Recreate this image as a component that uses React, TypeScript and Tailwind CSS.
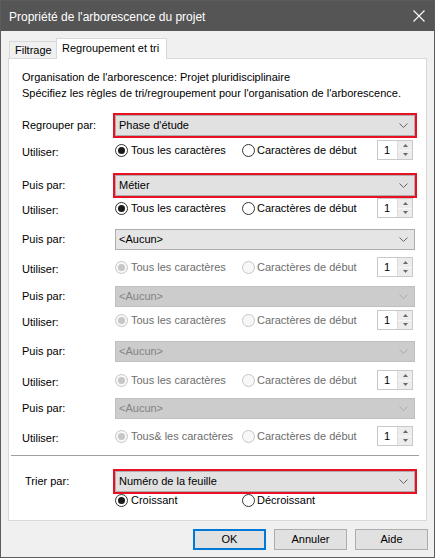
import React from "react";

function Chevron({ disabled }: { disabled?: boolean }) {
  return (
    <svg width="9" height="5" viewBox="0 0 9 5" className="shrink-0">
      <path d="M0.5 0.5 L4.5 4.5 L8.5 0.5" fill="none" stroke={disabled ? "#ababab" : "#666666"} strokeWidth="1" />
    </svg>
  );
}

function Select({ value, state }: { value: string; state: "hl" | "on" | "off" }) {
  if (state === "off") {
    return (
      <div className="w-[300px] h-[21px] flex items-center justify-between pl-[3px] pr-[6px] border border-[#bfbfbf] bg-[#cccccc] text-[#838383]">
        <span>{value}</span>
        <Chevron disabled />
      </div>
    );
  }
  if (state === "hl") {
    return (
      <div className="w-[300px] h-[21px] flex items-center justify-between pl-[3px] pr-[6px] border border-[#adadad] bg-[#e1e1e1] text-black ring-2 ring-[#e81123]">
        <span>{value}</span>
        <Chevron />
      </div>
    );
  }
  return (
    <div className="w-[300px] h-[21px] flex items-center justify-between pl-[3px] pr-[6px] border border-[#adadad] bg-[#e5e5e5] text-black">
      <span>{value}</span>
      <Chevron />
    </div>
  );
}

function Radio({ checked, disabled }: { checked?: boolean; disabled?: boolean }) {
  if (disabled) {
    return (
      <span className="w-[13px] h-[13px] rounded-full border border-[#c6c6c6] bg-[#f7f7f7] flex items-center justify-center shrink-0">
        {checked ? <span className="w-[7px] h-[7px] rounded-full bg-[#c6c6c6]" /> : null}
      </span>
    );
  }
  return (
    <span className="w-[13px] h-[13px] rounded-full border border-[#333333] bg-white flex items-center justify-center shrink-0">
      {checked ? <span className="w-[7px] h-[7px] rounded-full bg-[#1a1a1a]" /> : null}
    </span>
  );
}

function Spin() {
  return (
    <div className="w-[36px] h-[20px] border border-[#c9c9c9] bg-white flex shrink-0">
      <div className="flex-1 flex items-center pl-[6px] text-black">1</div>
      <div className="w-[15px] flex flex-col border-l border-[#dcdcdc]">
        <div className="flex-1 flex items-center justify-center bg-[#ececec]">
          <svg width="5" height="3" viewBox="0 0 5 3">
            <path d="M0 3 L2.5 0 L5 3 Z" fill="#6a6a6a" />
          </svg>
        </div>
        <div className="flex-1 flex items-center justify-center bg-[#ececec] border-t border-[#f8f8f8]">
          <svg width="5" height="3" viewBox="0 0 5 3">
            <path d="M0 0 L2.5 3 L5 0 Z" fill="#6a6a6a" />
          </svg>
        </div>
      </div>
    </div>
  );
}

function SelectRow({ label, value, state, mt }: { label: string; value: string; state: "hl" | "on" | "off"; mt: string }) {
  return (
    <div className={"flex items-center h-[21px] " + mt}>
      <div className="w-[93px]">{label}</div>
      <Select value={value} state={state} />
    </div>
  );
}

function UseRow({ mt, disabled, first }: { mt: string; disabled?: boolean; first?: string }) {
  const txt = disabled ? "text-[#6d6d6d]" : "text-black";
  return (
    <div className={"flex items-center h-[20px] " + mt}>
      <div className="w-[93px] mt-[4px]">Utiliser:</div>
      <div className="w-[127px] flex items-center">
        <Radio checked disabled={disabled} />
        <span className={"ml-[3px] " + txt}>{first ?? "Tous les caractères"}</span>
      </div>
      <div className="w-[135px] flex items-center">
        <Radio disabled={disabled} />
        <span className={"ml-[2px] " + txt}>Caractères de début</span>
      </div>
      <Spin />
    </div>
  );
}

export default function App() {
  return (
    <div className="w-[435px] h-[558px] bg-[#f0f0f0] border border-[#5c5c5c] flex flex-col font-['Liberation_Sans',Arial,sans-serif] text-[11px] text-black">
      {/* Title bar */}
      <div className="h-[30px] bg-[#555555] flex items-center justify-between pl-[8px] pr-[9px] text-white">
        <span className="text-[12px] mt-[1px]">Propriété de l'arborescence du projet</span>
        <svg width="12" height="12" viewBox="0 0 12 12">
          <path d="M0.5 0.5 L11.5 11.5 M11.5 0.5 L0.5 11.5" stroke="#ffffff" strokeWidth="1.1" fill="none" />
        </svg>
      </div>

      {/* Tabs */}
      <div className="h-[27px] flex items-end pl-[8px]">
        <div className="h-[17px] w-[47px] border-l border-t border-[#d9d9d9] bg-[#f0f0f0] pl-[5px] flex items-center">
          Filtrage
        </div>
        <div className="h-[21px] w-[111px] -mb-px relative z-10 border-l border-t border-r border-[#d9d9d9] bg-white pl-[5px] pb-[2px] flex items-center">
          Regroupement et tri
        </div>
      </div>

      {/* Panel */}
      <div className="mx-[7px] h-[463px] border border-[#d9d9d9] bg-white flex flex-col pl-[13px] pt-[10px]">
        <div className="leading-[16px]">
          <div>Organisation de l'arborescence: Projet pluridisciplinaire</div>
          <div>Spécifiez les règles de tri/regroupement pour l'organisation de l'arborescence.</div>
        </div>

        <SelectRow label="Regrouper par:" value="Phase d'étude" state="hl" mt="mt-[14px]" />
        <UseRow mt="mt-[4px]" />
        <SelectRow label="Puis par:" value="Métier" state="hl" mt="mt-[15px]" />
        <UseRow mt="mt-[2px]" />
        <SelectRow label="Puis par:" value="<Aucun>" state="on" mt="mt-[11px]" />
        <UseRow mt="mt-[7px]" disabled />
        <SelectRow label="Puis par:" value="<Aucun>" state="off" mt="mt-[9px]" />
        <UseRow mt="mt-[3px]" disabled />
        <SelectRow label="Puis par:" value="<Aucun>" state="off" mt="mt-[11px]" />
        <UseRow mt="mt-[8px]" disabled />
        <SelectRow label="Puis par:" value="<Aucun>" state="off" mt="mt-[8px]" />
        <UseRow mt="mt-[7px]" disabled first="Tous& les caractères" />

        <div className="mt-[9px] -ml-[11px] w-[408px] h-px bg-[#a0a0a0]" />

        <div className="flex items-center h-[21px] mt-[15px]">
          <div className="w-[90px] ml-[3px]">Trier par:</div>
          <Select value="Numéro de la feuille" state="hl" />
        </div>
        <div className="flex items-center h-[14px] mt-[1px]">
          <div className="w-[93px]" />
          <div className="w-[127px] flex items-center">
            <Radio checked />
            <span className="ml-[3px]">Croissant</span>
          </div>
          <div className="flex items-center">
            <Radio />
            <span className="ml-[2px]">Décroissant</span>
          </div>
        </div>
      </div>

      {/* Buttons */}
      <div className="mt-[8px] flex justify-end gap-[8px] pr-[6px]">
        <div className="w-[73px] h-[21px] border-2 border-[#0078d7] bg-[#e1e1e1] flex items-center justify-center">OK</div>
        <div className="w-[73px] h-[21px] border border-[#adadad] bg-[#e1e1e1] flex items-center justify-center">Annuler</div>
        <div className="w-[73px] h-[21px] border border-[#adadad] bg-[#e1e1e1] flex items-center justify-center">Aide</div>
      </div>
    </div>
  );
}
